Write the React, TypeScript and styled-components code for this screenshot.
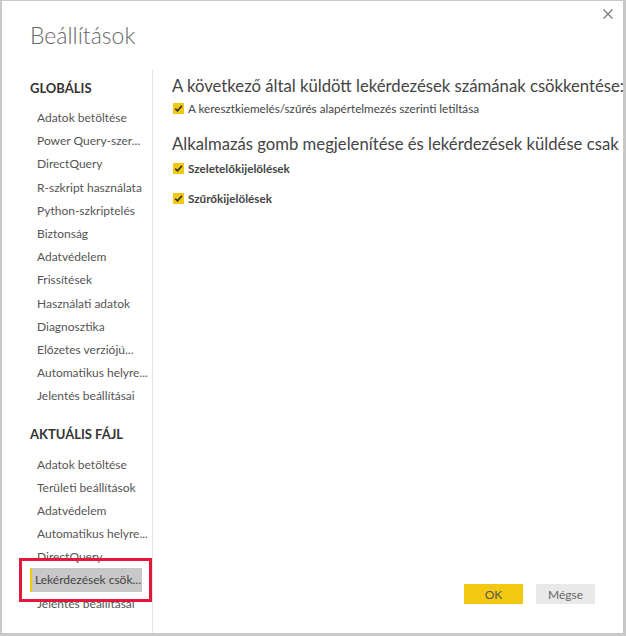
import React from "react";
import styled, { createGlobalStyle } from "styled-components";

const GlobalStyle = createGlobalStyle`
  html, body {
    margin: 0;
    padding: 0;
    background: #fff;
  }
  body {
    font-family: Lato, "Liberation Sans", sans-serif;
  }
  * {
    box-sizing: border-box;
  }
`;

const Dialog = styled.div`
  width: 626px;
  height: 636px;
  border-style: solid;
  border-color: #c8c8c8;
  border-width: 1px 3px 3px 2px;
  display: flex;
  flex-direction: column;
  background: #fff;
  overflow: hidden;
`;

const Header = styled.div`
  height: 69px;
  display: flex;
  justify-content: space-between;
  align-items: flex-start;
  flex-shrink: 0;
`;

const Title = styled.h1`
  margin: 18px 0 0 28px;
  font-size: 23px;
  line-height: 32px;
  font-weight: 300;
  color: #666;
`;

const CloseButton = styled.button`
  margin: 8px 10px 0 0;
  padding: 0;
  width: 10px;
  height: 10px;
  border: none;
  background: none;
  display: flex;
`;

const Body = styled.div`
  flex: 1;
  display: flex;
  min-height: 0;
`;

const Sidebar = styled.nav`
  width: 151px;
  flex-shrink: 0;
  border-right: 1px solid #e4e4e4;
  padding-top: 8px;
  display: flex;
  flex-direction: column;
`;

const SectionTitle = styled.div<{ $spaced?: boolean }>`
  margin: ${(p) => (p.$spaced ? "17px" : "0")} 0 8px 28px;
  font-size: 13px;
  line-height: 20px;
  font-weight: 700;
  color: #333;
  white-space: nowrap;
`;

const NavItem = styled.div<{ $active?: boolean }>`
  position: relative;
  margin-left: 28px;
  width: 112px;
  height: 23.2px;
  display: flex;
  align-items: center;
  padding-left: ${(p) => (p.$active ? "3px" : "7px")};
  border-left: ${(p) => (p.$active ? "2px solid #f2c811" : "none")};
  background: ${(p) => (p.$active ? "#c8c8c8" : "transparent")};
  font-size: 12px;
  color: ${(p) => (p.$active ? "#444" : "#555")};
  white-space: nowrap;

  ${(p) =>
    p.$active &&
    `
    &::after {
      content: "";
      position: absolute;
      left: -13px;
      top: -10px;
      right: -10px;
      bottom: -10px;
      border: 3px solid #e3173a;
      pointer-events: none;
      z-index: 2;
    }
  `}
`;

const Content = styled.div`
  flex: 1;
  min-width: 0;
  display: flex;
  flex-direction: column;
  overflow: hidden;
`;

const Main = styled.div`
  flex: 1;
  padding: 4px 0 0 19px;
`;

const Heading = styled.h2<{ $gap?: number }>`
  margin: ${(p) => p.$gap ?? 0}px 0 0 0;
  font-size: 16.7px;
  line-height: 24px;
  font-weight: 400;
  color: #444;
  white-space: nowrap;
`;

const CheckRow = styled.label<{ $gap: number; $bold?: boolean }>`
  margin-top: ${(p) => p.$gap}px;
  height: 18px;
  display: flex;
  align-items: center;
  gap: 4px;
  padding-left: 1px;
  font-size: 11.7px;
  font-weight: ${(p) => (p.$bold ? 700 : 400)};
  color: #444;
  white-space: nowrap;
`;

const Box = styled.span`
  width: 11px;
  height: 11px;
  background: #f2c811;
  display: flex;
  align-items: center;
  justify-content: center;
  flex-shrink: 0;
`;

const Footer = styled.div`
  display: flex;
  justify-content: flex-end;
  gap: 13px;
  padding: 0 28px 29px 0;
`;

const Button = styled.button<{ $primary?: boolean }>`
  width: 59px;
  height: 20px;
  border: none;
  padding: 0;
  font-family: inherit;
  font-size: 12px;
  background: ${(p) => (p.$primary ? "#f2c811" : "#e9e9e9")};
  color: ${(p) => (p.$primary ? "#555" : "#666")};
`;

const globalItems = [
  "Adatok betöltése",
  "Power Query-szer...",
  "DirectQuery",
  "R-szkript használata",
  "Python-szkriptelés",
  "Biztonság",
  "Adatvédelem",
  "Frissítések",
  "Használati adatok",
  "Diagnosztika",
  "Előzetes verziójú...",
  "Automatikus helyre...",
  "Jelentés beállításai",
];

const fileItems = [
  "Adatok betöltése",
  "Területi beállítások",
  "Adatvédelem",
  "Automatikus helyre...",
  "DirectQuery",
  "Lekérdezések csök...",
  "Jelentés beállításai",
];

function Check() {
  return (
    <Box>
      <svg width="9" height="9" viewBox="0 0 9 9">
        <path d="M1.2 4.6 L3.5 6.9 L7.9 1.9" fill="none" stroke="#333" strokeWidth="1.6" />
      </svg>
    </Box>
  );
}

export default function App() {
  return (
    <>
      <GlobalStyle />
      <Dialog>
        <Header>
          <Title>Beállítások</Title>
          <CloseButton aria-label="Bezárás">
            <svg width="10" height="10" viewBox="0 0 10 10">
              <path d="M0.5 0.5 L9.5 9.5 M9.5 0.5 L0.5 9.5" stroke="#777" strokeWidth="1.2" />
            </svg>
          </CloseButton>
        </Header>
        <Body>
          <Sidebar>
            <SectionTitle>GLOBÁLIS</SectionTitle>
            {globalItems.map((t) => (
              <NavItem key={t}>{t}</NavItem>
            ))}
            <SectionTitle $spaced>AKTUÁLIS FÁJL</SectionTitle>
            {fileItems.map((t, i) => (
              <NavItem key={t + i} $active={i === 5}>
                {t}
              </NavItem>
            ))}
          </Sidebar>
          <Content>
            <Main>
              <Heading>A következő által küldött lekérdezések számának csökkentése:</Heading>
              <CheckRow $gap={1}>
                <Check />A keresztkiemelés/szűrés alapértelmezés szerinti letiltása
              </CheckRow>
              <Heading $gap={15}>Alkalmazás gomb megjelenítése és lekérdezések küldése csak</Heading>
              <CheckRow $gap={3} $bold>
                <Check />Szeletelőkijelölések
              </CheckRow>
              <CheckRow $gap={12} $bold>
                <Check />Szűrőkijelölések
              </CheckRow>
            </Main>
            <Footer>
              <Button $primary>OK</Button>
              <Button>Mégse</Button>
            </Footer>
          </Content>
        </Body>
      </Dialog>
    </>
  );
}
